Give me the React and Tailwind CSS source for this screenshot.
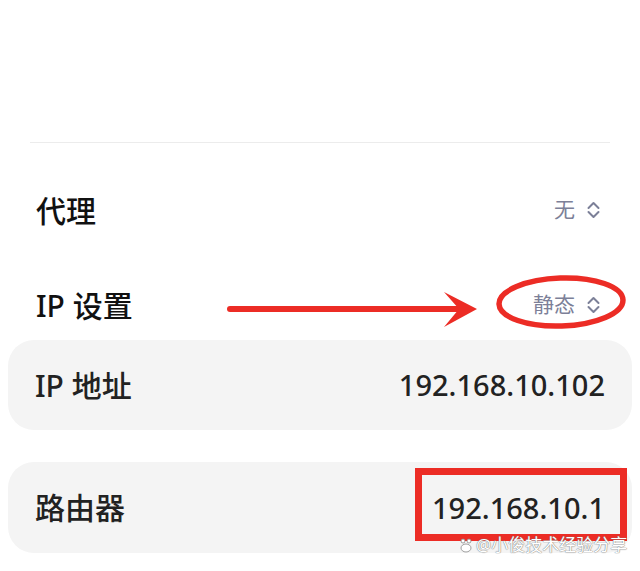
export default function App() {
  return (
    <div
      className="relative h-[571px] w-full overflow-hidden bg-white"
      style={{ fontFamily: '"Noto Sans", "Noto Sans CJK SC", sans-serif' }}
    >
      <div className="h-[142px]" />
      <div className="mx-[30px] h-px bg-[#ececec]" />

      <SelectRow label="代理" value="无" height="h-[134px]" />
      <SelectRow label="IP 设置" value="静态" height="h-[56px]" />

      <div className="mx-[8px] mt-[7px] flex h-[90px] items-center justify-between rounded-[26px] bg-[#f4f4f4] px-[27px]">
        <span className="text-[30px] font-medium text-[#222]">IP 地址</span>
        <span className="text-[29px] font-medium text-[#222]">192.168.10.102</span>
      </div>

      <div className="mx-[8px] mt-[32px] flex h-[91px] items-center justify-between rounded-[26px] bg-[#f4f4f4] px-[27px]">
        <span className="text-[30px] font-medium text-[#222]">路由器</span>
        <span className="text-[29px] font-medium text-[#222]">192.168.10.1</span>
      </div>

      {/* red annotations drawn over the screenshot */}
      <svg className="pointer-events-none absolute left-0 top-0" width="640" height="571" viewBox="0 0 640 571">
        <line x1="230" y1="309" x2="462" y2="309" stroke="#ec2c25" strokeWidth="6" strokeLinecap="round" />
        <polygon points="444,292 477,309 444,327 459,309" fill="#ec2c25" />
        <ellipse cx="561" cy="302" rx="62" ry="24" fill="none" stroke="#ec2c25" strokeWidth="5.5" transform="rotate(-2 561 302)" />
        <rect x="418.5" y="471.5" width="205" height="66" fill="none" stroke="#ec2c25" strokeWidth="7" />
      </svg>

      <div className="absolute left-[458px] top-[536px] flex items-center gap-[2px] text-[17px] leading-none text-white [text-shadow:0_0_1px_#777,0_0_1px_#777]">
        <svg width="16" height="16" viewBox="0 0 16 16" fill="white" stroke="#888" strokeWidth="0.8">
          <circle cx="5" cy="4" r="2" />
          <circle cx="11" cy="4" r="2" />
          <ellipse cx="8" cy="11" rx="5" ry="4" />
        </svg>
        <span>@小俊技术经验分享</span>
      </div>
    </div>
  );
}

function SelectRow({ label, value, height }) {
  return (
    <div className={`${height} flex items-center justify-between pl-[36px] pr-[40px]`}>
      <span className="text-[30px] font-medium text-[#111]">{label}</span>
      <div className="flex items-center gap-[12px] text-[21px] text-[#7c8098]">
        <span>{value}</span>
        <svg width="13" height="18" viewBox="0 0 13 18" fill="none" stroke="#7c8098" strokeWidth="2" strokeLinecap="round" strokeLinejoin="round">
          <polyline points="1.5,7 6.5,2 11.5,7" />
          <polyline points="1.5,11 6.5,16 11.5,11" />
        </svg>
      </div>
    </div>
  );
}
